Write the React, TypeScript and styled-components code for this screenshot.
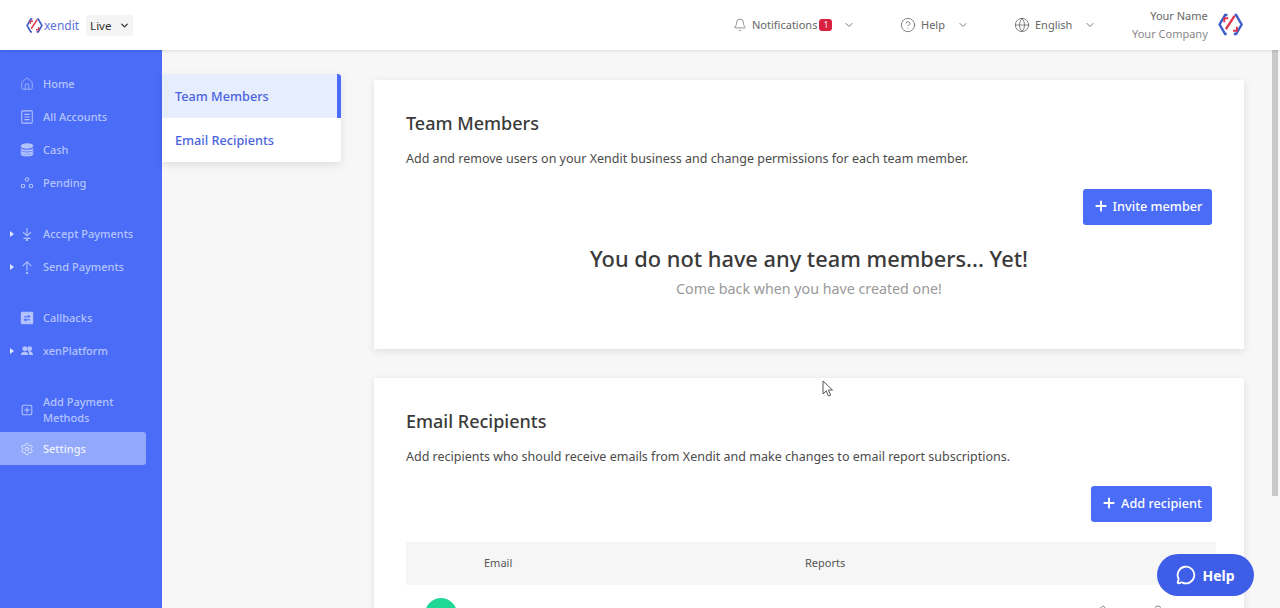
import React from 'react';
import styled, {createGlobalStyle} from 'styled-components';
import {Bell, ChevronDown, CircleHelp, Globe, House, Plus, MessageCircle, Settings, Pencil, Trash2} from 'lucide-react';

const GlobalStyle = createGlobalStyle`
  html, body {
    margin: 0;
    height: 100%;
    overflow: hidden;
    background: #f7f7f7;
  }
  * {
    box-sizing: border-box;
  }
  body {
    font-family: "Noto Sans", "Open Sans", "Liberation Sans", sans-serif;
    color: #3c3c3c;
  }
`;

const Logo = ({size}: {size: number}) => (
    <svg width={size} height={size} viewBox="0 0 32 32" fill="none">
        <path d="M12 4 L9 4 L2 16 L9 28 L11 28" stroke="#3f5cc9" strokeWidth="3"/>
        <path d="M20 28 L23 28 L30 16 L23 4 L21 4" stroke="#3f5cc9" strokeWidth="3"/>
        <path d="M10 22 L21 5" stroke="#e0364c" strokeWidth="3"/>
        <path d="M8 13 L8 8 L13 8" stroke="#e0364c" strokeWidth="2.4"/>
        <path d="M24 19 L24 24 L19 24" stroke="#e0364c" strokeWidth="2.4"/>
    </svg>
);

const SideIcon = ({children}: {children: React.ReactNode}) => (
    <svg width="14" height="14" viewBox="0 0 16 16" fill="none" stroke="#b5c4ff" strokeWidth="1.2">
        {children}
    </svg>
);

const navIcons: Record<string, React.ReactNode> = {
    accounts: <SideIcon><rect x="2" y="1" width="12" height="14" rx="1"/><path d="M5 5h6M5 8h6M5 11h6"/></SideIcon>,
    cash: <SideIcon><ellipse cx="8" cy="3.5" rx="6.500" ry="2.500" fill="#b5c4ff"/><path d="M1.500 6.500c0 3 13 3 13 0M1.500 9.500c0 3 13 3 13 0M1.500 12c0 3 13 3 13 0" strokeWidth="2"/></SideIcon>,
    pending: <SideIcon><circle cx="8" cy="4" r="2"/><circle cx="3.500" cy="11.500" r="2"/><circle cx="12.500" cy="11.500" r="2"/></SideIcon>,
    accept: <SideIcon><path d="M8 1v9M3.500 6 8 10l4.500-4M4 13h8"/><circle cx="8" cy="15" r=".7"/></SideIcon>,
    send: <SideIcon><path d="M8 12.500V2M3 7 8 2l5 5"/><circle cx="8" cy="15" r=".8"/></SideIcon>,
    callbacks: <SideIcon><rect x="1.500" y="1.500" width="13" height="13" rx="1" fill="#b5c4ff"/><path d="M4.500 6.500h5M9 4.500l2 2-2 1M11.500 10h-5M7 8.500l-2 1.500 2 1.500" stroke="#4a6cf7"/></SideIcon>,
    platform: <SideIcon><circle cx="5.500" cy="5.500" r="2.200" fill="#b5c4ff"/><circle cx="11" cy="5.500" r="2.200" fill="#b5c4ff"/><path d="M1 12.500c0-5 8.500-5 8.500 0zM10.500 12.500c0-3-1-3.500-1.500-4 3-1 6 .5 6 4z" fill="#b5c4ff" stroke="none"/></SideIcon>,
    add: <SideIcon><rect x="2.500" y="2.500" width="11" height="11" rx="1.500"/><path d="M8 5v6M5 8h6"/></SideIcon>,
};

type NavEntry = {
    label: string;
    icon: React.ReactNode;
    caret?: boolean;
    gap?: number;
    active?: boolean;
};

const navEntries: NavEntry[] = [
    {label: 'Home', icon: <House size={14} strokeWidth={1.3}/>},
    {label: 'All Accounts', icon: navIcons.accounts},
    {label: 'Cash', icon: navIcons.cash},
    {label: 'Pending', icon: navIcons.pending},
    {label: 'Accept Payments', icon: navIcons.accept, caret: true, gap: 18},
    {label: 'Send Payments', icon: navIcons.send, caret: true},
    {label: 'Callbacks', icon: navIcons.callbacks, gap: 18},
    {label: 'xenPlatform', icon: navIcons.platform, caret: true},
    {label: 'Add Payment Methods', icon: navIcons.add, gap: 20},
    {label: 'Settings', icon: <Settings size={14} strokeWidth={1.3}/>, active: true},
];

const App = () => {
    return (
        <Page>
            <GlobalStyle/>
            <Header>
                <Brand>
                    <Logo size={17}/>
                    <BrandName>xendit</BrandName>
                    <ModeSelect>Live<ChevronDown size={11} strokeWidth={3}/></ModeSelect>
                </Brand>
                <HeaderMenu>
                    <HeaderItem $width={167}>
                        <Bell size={14} strokeWidth={1.2}/>
                        <span>Notifications</span>
                        <Badge>1</Badge>
                        <Caret $offset={6}><ChevronDown size={12}/></Caret>
                    </HeaderItem>
                    <HeaderItem $width={114}>
                        <CircleHelp size={16} strokeWidth={1.2}/>
                        <span>Help</span>
                        <Caret><ChevronDown size={12}/></Caret>
                    </HeaderItem>
                    <HeaderItem $width={118}>
                        <Globe size={16} strokeWidth={1.2}/>
                        <span>English</span>
                        <Caret><ChevronDown size={12}/></Caret>
                    </HeaderItem>
                    <Profile>
                        <ProfileText>
                            <div>Your Name</div>
                            <div>Your Company</div>
                        </ProfileText>
                        <Logo size={27}/>
                    </Profile>
                </HeaderMenu>
            </Header>
            <Body>
                <Sidebar>
                    {navEntries.map((entry) => (
                        <NavRow key={entry.label} $gap={entry.gap} $active={entry.active} $tall={entry.label.length > 15 && !entry.caret}>
                            {entry.caret && <NavCaret/>}
                            <NavIcon>{entry.icon}</NavIcon>
                            <NavLabel>{entry.label}</NavLabel>
                        </NavRow>
                    ))}
                </Sidebar>
                <SubMenu>
                    <SubItem $active>Team Members</SubItem>
                    <SubItem>Email Recipients</SubItem>
                </SubMenu>
                <Main>
                    <Card $height={269}>
                        <CardTitle>Team Members</CardTitle>
                        <CardText>Add and remove users on your Xendit business and change permissions for each team member.</CardText>
                        <Actions $top={22}>
                            <PrimaryButton $width={129}><Plus size={16} strokeWidth={2.8}/>Invite member</PrimaryButton>
                        </Actions>
                        <Empty>
                            <EmptyTitle>You do not have any team members... Yet!</EmptyTitle>
                            <EmptyText>Come back when you have created one!</EmptyText>
                        </Empty>
                    </Card>
                    <Card>
                        <CardTitle>Email Recipients</CardTitle>
                        <CardText>Add recipients who should receive emails from Xendit and make changes to email report subscriptions.</CardText>
                        <Actions $top={21}>
                            <PrimaryButton $width={121}><Plus size={16} strokeWidth={2.8}/>Add recipient</PrimaryButton>
                        </Actions>
                        <TableHead>
                            <EmailCol>Email</EmailCol>
                            <span>Reports</span>
                        </TableHead>
                        <TableRow>
                            <Avatar/>
                            <RowActions>
                                <Pencil size={14} strokeWidth={1.5}/>
                                <Trash2 size={14} strokeWidth={1.5}/>
                            </RowActions>
                        </TableRow>
                    </Card>
                </Main>
            </Body>
            <Scrollbar/>
            <Pointer viewBox="0 0 12 18" width="12" height="18">
                <path d="M1 1v13l3.200-3 2.300 5 2.200-1-2.300-5H10.500z" fill="#fff" stroke="#555" strokeWidth="1"/>
            </Pointer>
            <HelpButton><MessageCircle size={20} strokeWidth={2.2}/>Help</HelpButton>
        </Page>
    )
};

const Page = styled.div`
  position: relative;
  width: 1280px;
  height: 608px;
  overflow: hidden;
  background: #f7f7f7;
`;

const Header = styled.header`
  position: relative;
  z-index: 2;
  display: flex;
  align-items: center;
  justify-content: space-between;
  height: 50px;
  padding-left: 26px;
  background: #fff;
  box-shadow: 0 1px 3px rgba(0, 0, 0, 0.12);
`;

const Brand = styled.div`
  display: flex;
  align-items: center;
`;

const BrandName = styled.span`
  margin-left: 1px;
  color: #5a72d8;
  font-size: 12px;
`;

const ModeSelect = styled.div`
  display: flex;
  align-items: center;
  justify-content: space-between;
  width: 47px;
  height: 21px;
  margin-left: 7px;
  padding: 0 3px 0 4px;
  border-radius: 3px;
  background: #f4f4f4;
  font-size: 11.5px;
  color: #333;
`;

const HeaderMenu = styled.div`
  display: flex;
  align-items: center;
  padding-bottom: 1px;
  color: #666;
  font-size: 11px;
`;

const HeaderItem = styled.div<{ $width: number }>`
  display: flex;
  align-items: center;
  gap: 5px;
  width: ${({$width}) => $width}px;
  color: #666;

  svg {
    flex-shrink: 0;
  }
`;

const Badge = styled.span`
  display: flex;
  align-items: center;
  justify-content: center;
  width: 13px;
  height: 12px;
  margin-left: -3px;
  border-radius: 3px;
  background: #d8203f;
  color: #fff;
  font-size: 8px;
`;

const Caret = styled.span<{ $offset?: number }>`
  display: flex;
  margin-left: ${({$offset}) => $offset ?? 7}px;
  color: #777;
`;

const Profile = styled.div`
  display: flex;
  align-items: center;
  gap: 10px;
  width: 148px;
  padding-right: 37px;
`;

const ProfileText = styled.div`
  flex: 1;
  text-align: right;
  white-space: nowrap;
  line-height: 18px;
  font-size: 11px;
  color: #666;

  div + div {
    color: #888;
  }
`;

const Body = styled.div`
  display: flex;
  height: 558px;
`;

const Sidebar = styled.nav`
  flex: 0 0 162px;
  padding: 17px 16px 0 0;
  background: #4a6cf7;
`;

const NavRow = styled.div<{ $gap?: number; $active?: boolean; $tall?: boolean }>`
  position: relative;
  display: flex;
  align-items: center;
  height: ${({$tall}) => ($tall ? 45 : 33)}px;
  margin-top: ${({$gap}) => $gap ?? 0}px;
  padding-left: 20px;
  border-radius: 0 3px 3px 0;
  background: ${({$active}) => ($active ? '#92a9fb' : 'transparent')};
  color: ${({$active}) => ($active ? '#eef1ff' : '#b5c4ff')};
  font-size: 11px;
  font-weight: 500;
  line-height: 16px;
`;

const NavCaret = styled.span`
  position: absolute;
  left: 10px;
  top: 50%;
  margin-top: -3px;
  border-left: 4px solid #dfe5ff;
  border-top: 3px solid transparent;
  border-bottom: 3px solid transparent;
`;

const NavIcon = styled.span`
  display: flex;
  align-items: center;
  justify-content: center;
  flex: 0 0 14px;
  margin-right: 9px;
`;

const NavLabel = styled.span`
  max-width: 95px;
`;

const SubMenu = styled.aside`
  flex: 0 0 179px;
  align-self: flex-start;
  margin-top: 24px;
  background: #fff;
  border-radius: 0 0 4px 0;
  box-shadow: 0 3px 8px rgba(0, 0, 0, 0.1);
`;

const SubItem = styled.div<{ $active?: boolean }>`
  display: flex;
  align-items: center;
  height: 44px;
  padding-left: 13px;
  border-right: 4px solid ${({$active}) => ($active ? '#4a6cf7' : 'transparent')};
  border-radius: 0 3px 0 0;
  background: ${({$active}) => ($active ? '#e6edfd' : '#fff')};
  color: #4a63dc;
  font-size: 12.7px;
  font-weight: 500;
`;

const Main = styled.main`
  display: flex;
  flex-direction: column;
  gap: 29px;
  width: 870px;
  margin: 30px 0 0 33px;
`;

const Card = styled.section<{ $height?: number }>`
  position: relative;
  flex-shrink: 0;
  height: ${({$height}) => ($height ? `${$height}px` : 'auto')};
  padding: 31px 32px 0;
  background: #fff;
  box-shadow: 0 2px 8px rgba(0, 0, 0, 0.1);
`;

const CardTitle = styled.h2`
  margin: 0;
  font-size: 18px;
  font-weight: 500;
  line-height: 24px;
  color: #3a3a3a;
`;

const CardText = styled.p`
  margin: 15px 0 0;
  font-size: 12.5px;
  line-height: 17px;
  color: #4b4b4b;
`;

const Actions = styled.div<{ $top: number }>`
  display: flex;
  justify-content: flex-end;
  margin-top: ${({$top}) => $top}px;
`;

const PrimaryButton = styled.button<{ $width: number }>`
  display: flex;
  align-items: center;
  justify-content: center;
  gap: 4px;
  width: ${({$width}) => $width}px;
  height: 36px;
  padding: 0 0 2px;
  border: 0;
  border-radius: 3px;
  background: #4a6cf7;
  color: #fff;
  font-family: inherit;
  font-size: 12.7px;
  font-weight: 500;
`;

const Empty = styled.div`
  margin-top: 20px;
  text-align: center;
`;

const EmptyTitle = styled.div`
  font-size: 21.8px;
  font-weight: 500;
  line-height: 28px;
  color: #3a3a3a;
`;

const EmptyText = styled.div`
  margin-top: 6px;
  font-size: 14.25px;
  line-height: 20px;
  color: #999;
`;

const TableHead = styled.div`
  display: flex;
  align-items: center;
  height: 43px;
  margin: 20px -4px 0 0;
  padding-bottom: 2px;
  background: #f6f6f6;
  font-size: 11px;
  color: #555;
`;

const EmailCol = styled.span`
  width: 399px;
  padding-left: 78px;
`;

const TableRow = styled.div`
  display: flex;
  justify-content: space-between;
  height: 60px;
  padding: 13px 47px 0 19px;
`;

const Avatar = styled.div`
  width: 32px;
  height: 32px;
  border-radius: 50%;
  background: #1fd896;
`;

const RowActions = styled.div`
  display: flex;
  align-items: flex-start;
  gap: 45px;
  padding-top: 7px;
  color: #777;
`;

const Scrollbar = styled.div`
  position: absolute;
  top: 36px;
  right: 2px;
  width: 6px;
  height: 460px;
  border-radius: 2px 2px 0 0;
  background: #c8c8c8;
`;

const Pointer = styled.svg`
  position: absolute;
  left: 822px;
  top: 380px;
`;

const HelpButton = styled.div`
  position: absolute;
  left: 1157px;
  top: 554px;
  display: flex;
  align-items: center;
  justify-content: center;
  gap: 6px;
  width: 97px;
  height: 42px;
  border-radius: 21px;
  background: #3f5ee8;
  color: #fff;
  font-size: 14px;
  font-weight: 700;
`;

export default App;
